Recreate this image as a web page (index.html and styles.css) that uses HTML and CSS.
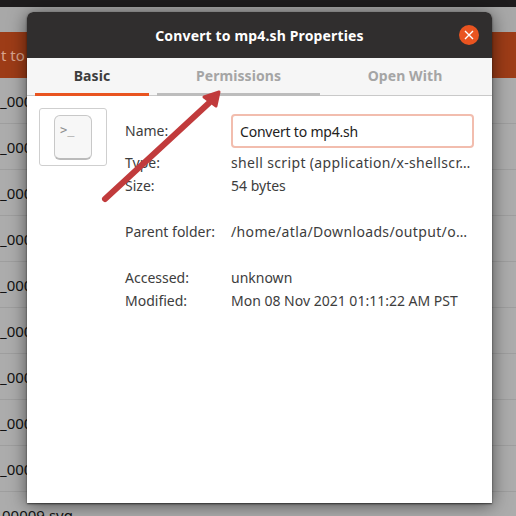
FILE: index.html
```html
<!DOCTYPE html>
<html lang="en">
  <head>
    <meta charset="UTF-8" />
    <meta name="viewport" content="width=device-width, initial-scale=1.0" />
    <title>Convert to mp4.sh Properties</title>
    <link rel="stylesheet" href="styles.css">
  </head>
  <body>
    <div class="topbar"></div>
    <div class="filelist">
      <div class="listhead"></div>
      <div class="row selected"><span>t to</span></div>
      <div class="row"><span>_000</span></div>
      <div class="row"><span>_000</span></div>
      <div class="row"><span>_000</span></div>
      <div class="row"><span>_000</span></div>
      <div class="row"><span>_000</span></div>
      <div class="row"><span>_000</span></div>
      <div class="row"><span>_000</span></div>
      <div class="row"><span>_000</span></div>
      <div class="row"><span>_000</span></div>
      <div class="row last"><span>00009.svg</span></div>
    </div>

    <div class="dialog">
      <div class="titlebar">
        <span class="title">Convert to mp4.sh Properties</span>
        <span class="close">
          <svg width="10" height="10" viewBox="0 0 10 10">
            <path d="M1 1 L9 9 M9 1 L1 9" stroke="#fff" stroke-width="1.4" fill="none" />
          </svg>
        </span>
      </div>
      <div class="tabs">
        <div class="tab tab-basic">Basic</div>
        <div class="tab tab-perm">Permissions</div>
        <div class="tab tab-open">Open With</div>
      </div>
      <div class="content">
        <div class="iconbox">
          <div class="fileicon">&gt;_</div>
        </div>
        <div class="info">
          <div class="label">Name:</div>
          <input class="nameinput" type="text" value="Convert to mp4.sh" />
          <div class="label">Type:</div>
          <div class="value long">shell script (application/x-shellscr…</div>
          <div class="label">Size:</div>
          <div class="value">54 bytes</div>
          <div class="spacer"></div>
          <div class="label">Parent folder:</div>
          <div class="value long">/home/atla/Downloads/output/o…</div>
          <div class="spacer"></div>
          <div class="label">Accessed:</div>
          <div class="value">unknown</div>
          <div class="label">Modified:</div>
          <div class="value">Mon 08 Nov 2021 01:11:22 AM PST</div>
        </div>
      </div>
    </div>

    <svg class="arrow" width="516" height="516" viewBox="0 0 516 516">
      <path d="M105 199 L209 103" stroke="#c13b3c" stroke-width="6" stroke-linecap="round" fill="none" />
      <path d="M219 92 L204 97 L216 106 Z" fill="#c13b3c" stroke="#c13b3c" stroke-width="3" stroke-linejoin="round" />
    </svg>
  </body>
</html>
```

FILE: styles.css
```css
body {
  margin: 0;
  width: 516px;
  height: 516px;
  overflow: hidden;
  position: relative;
  background-color: #acacac;
  font-family: "Noto Sans", sans-serif;
  font-size: 14px;
  color: #3d3d3d;
}

.topbar {
  height: 7px;
  background-color: #1e1c1d;
}

.filelist {
  height: 509px;
  overflow: hidden;
}

.listhead {
  height: 25px;
  background-color: #a8a8a8;
}

.row {
  height: 45px;
  border-bottom: 1px solid #9e9e9e;
  display: flex;
  align-items: center;
  white-space: nowrap;
  color: #111;
  font-size: 15px;
}

.row.selected {
  background-color: #9d3c17;
  border-bottom: none;
  height: 46px;
  color: #d9a58f;
  padding-left: 1px;
}

.row.last {
  padding-left: 2px;
}

.dialog {
  position: absolute;
  left: 27px;
  top: 12px;
  width: 465px;
  height: 491px;
  background-color: #fff;
  border-radius: 6px 6px 0 0;
  box-shadow: 0 1px 2px rgba(0, 0, 0, 0.6), 0 2px 18px rgba(0, 0, 0, 0.55);
  overflow: hidden;
}

.titlebar {
  height: 46px;
  background-color: #302e2e;
  display: flex;
  align-items: center;
  justify-content: center;
  position: relative;
}

.title {
  color: #fff;
  font-weight: 700;
  font-size: 14px;
  letter-spacing: 0.15px;
}

.close {
  position: absolute;
  right: 13px;
  top: 13px;
  width: 20px;
  height: 20px;
  border-radius: 50%;
  background-color: #e95420;
  display: flex;
  align-items: center;
  justify-content: center;
}

.tabs {
  height: 37px;
  padding: 0 8px;
  background-color: #f6f6f6;
  border-bottom: 1px solid #c9c9c9;
  display: flex;
  gap: 8px;
}

.tab {
  display: flex;
  align-items: center;
  justify-content: center;
  font-weight: 700;
  font-size: 14px;
  color: #a5a5a5;
  height: 35px;
  border-bottom: 3px solid transparent;
  letter-spacing: 0.08px;
}

.tab-basic {
  width: 114px;
  color: #3d3d3d;
  border-bottom-color: #e95420;
}

.tab-perm {
  width: 163px;
  border-bottom-color: #bdbdbd;
}

.tab-open {
  width: 154px;
}

.content {
  display: flex;
  align-items: flex-start;
  padding: 12px 18px 0 12px;
}

.iconbox {
  width: 66px;
  height: 56px;
  border: 1px solid #cfcfcf;
  border-radius: 3px;
  display: flex;
  justify-content: center;
  align-items: center;
  flex-shrink: 0;
  background-color: #fff;
}

.fileicon {
  width: 38px;
  height: 45px;
  box-sizing: border-box;
  border: 1px solid #c8c8c8;
  border-bottom: 2px solid #bbb;
  border-radius: 6px;
  background-color: #f7f7f7;
  color: #8f8f8f;
  font-family: "DejaVu Sans Mono", monospace;
  font-size: 12px;
  line-height: 14px;
  padding: 7px 0 0 5px;
}

.info {
  margin: 6px 0 0 18px;
  display: grid;
  grid-template-columns: 106px 243px;
  grid-template-rows: 37px;
  grid-auto-rows: 23px;
  align-items: center;
}

.info > .label:first-child {
  align-self: start;
  line-height: 34px;
}

.nameinput {
  align-self: start;
  box-sizing: border-box;
  width: 243px;
  height: 34px;
  margin: 0;
  padding: 0 7px;
  border: 2px solid #f2bdae;
  border-radius: 4px;
  font-family: "Noto Sans", sans-serif;
  font-size: 14px;
  letter-spacing: -0.2px;
  color: #222;
  background-color: #fff;
  outline: none;
}

.spacer {
  grid-column: 1 / 3;
}

.label,
.value {
  white-space: nowrap;
}

.value.long {
  letter-spacing: 0.35px;
}

.arrow {
  position: absolute;
  left: 0;
  top: 0;
  pointer-events: none;
}
```
